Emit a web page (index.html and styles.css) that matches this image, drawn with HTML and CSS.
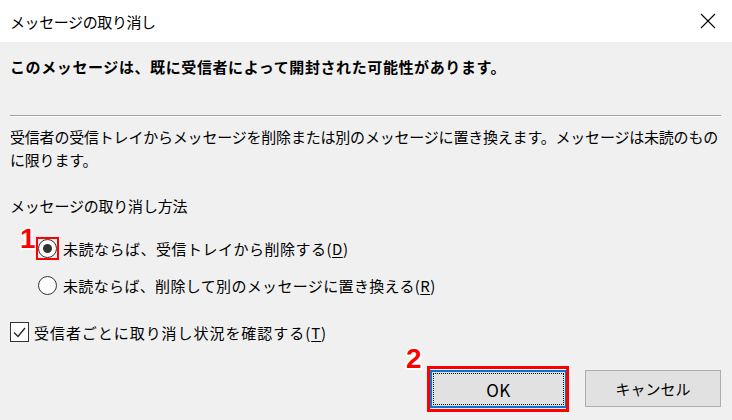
FILE: index.html
```html
<!DOCTYPE html>
<html lang="ja">
<head>
<meta charset="utf-8">
<title>メッセージの取り消し</title>
<link rel="stylesheet" href="styles.css">
</head>
<body>
<div class="dialog">
  <div class="titlebar">
    <span class="title">メッセージの取り消し</span>
    <svg class="close" width="16" height="16" viewBox="0 0 16 16"><path d="M1 1 L15 15 M15 1 L1 15" stroke="#000" stroke-width="1.1" fill="none"/></svg>
  </div>
  <div class="content">
    <p class="heading">このメッセージは、既に受信者によって開封された可能性があります。</p>
    <div class="sep"></div>
    <p class="desc">受信者の受信トレイからメッセージを削除または別のメッセージに置き換えます。メッセージは未読のものに限ります。</p>
    <p class="label">メッセージの取り消し方法</p>
    <div class="option first">
      <span class="radio checked"><span class="mark mark1">1</span><span class="hl hl1"></span></span>
      <span class="text">未読ならば、受信トレイから削除する(<u>D</u>)</span>
    </div>
    <div class="option second">
      <span class="radio"></span>
      <span class="text">未読ならば、削除して別のメッセージに置き換える(<u>R</u>)</span>
    </div>
    <div class="check-row">
      <span class="checkbox"><svg width="17" height="17" viewBox="0 0 17 17"><path d="M3 8.5 L7 12.5 L14 4" stroke="#222" stroke-width="1.3" fill="none"/></svg></span>
      <span class="text">受信者ごとに取り消し状況を確認する(<u>T</u>)</span>
    </div>
    <div class="buttons">
      <button class="btn ok">OK<span class="mark mark2">2</span><span class="hl hl2"></span></button>
      <button class="btn cancel">キャンセル</button>
    </div>
  </div>
</div>
</body>
</html>
```

FILE: styles.css
```css
html, body {
  margin: 0;
  padding: 0;
}
body {
  width: 732px;
  height: 420px;
  background: #f0f0f0;
  font-family: "Noto Sans CJK JP", "Noto Sans", sans-serif;
  color: #000;
  overflow: hidden;
}
.dialog {
  width: 732px;
  height: 420px;
}
.titlebar {
  height: 42px;
  background: #fff;
  display: flex;
  align-items: center;
  justify-content: space-between;
  padding: 0 16px 0 10px;
  box-sizing: border-box;
}
.title {
  font-size: 15px;
  letter-spacing: -0.4px;
  line-height: 20px;
  margin-top: 2px;
}
.close {
  display: block;
}
.content {
  padding: 0 10px;
}
p {
  margin: 0;
}
.heading {
  margin-top: 14px;
  font-size: 15px;
  font-weight: bold;
  line-height: 22px;
  letter-spacing: 0.6px;
}
.sep {
  margin-top: 37px;
  width: 711px;
  height: 1px;
  background: #a0a0a0;
  border-bottom: 1px solid #fff;
}
.desc {
  margin-top: 8px;
  width: 712px;
  font-size: 15px;
  line-height: 23px;
  letter-spacing: -0.2px;
}
.label {
  margin-top: 24px;
  font-size: 15px;
  line-height: 22px;
  letter-spacing: -0.2px;
}
.option, .check-row {
  display: flex;
  align-items: center;
  height: 22px;
  font-size: 15px;
}
.option {
  padding-left: 28px;
}
.option.first {
  margin-top: 20px;
  letter-spacing: 0.5px;
}
.option.second {
  margin-top: 15px;
  letter-spacing: 0.35px;
}
.check-row {
  margin-top: 25px;
  letter-spacing: 0.95px;
}
.text u {
  text-decoration-thickness: 1px;
  text-underline-offset: 2px;
}
.radio {
  position: relative;
  width: 19px;
  height: 19px;
  box-sizing: border-box;
  border: 1px solid #333;
  border-radius: 50%;
  background: #fff;
  margin-right: 6px;
  flex: none;
}
.radio.checked::after {
  content: "";
  position: absolute;
  left: 4px;
  top: 4px;
  width: 9px;
  height: 9px;
  border-radius: 50%;
  background: #333;
}
.checkbox {
  width: 19px;
  height: 20px;
  box-sizing: border-box;
  border: 1px solid #333;
  background: #fff;
  margin-right: 5px;
  display: flex;
  align-items: center;
  justify-content: center;
  flex: none;
}
.checkbox svg {
  display: block;
}
.buttons {
  display: flex;
  justify-content: flex-end;
  align-items: flex-start;
  gap: 18px;
  margin-top: 27px;
  padding-right: 1px;
}
.btn {
  position: relative;
  font-family: "Noto Sans CJK JP", "Noto Sans", sans-serif;
  color: #000;
  background: #e1e1e1;
  box-sizing: border-box;
  padding: 0;
  margin: 0;
}
.ok {
  width: 137px;
  height: 38px;
  font-size: 17px;
  letter-spacing: 0.5px;
  border: 2px solid #0078d7;
  outline: 1px dotted #000;
  outline-offset: -4px;
}
.cancel {
  width: 136px;
  height: 37px;
  font-size: 15px;
  border: 1px solid #adadad;
}
.mark {
  position: absolute;
  font-family: "Liberation Sans", Arial, sans-serif;
  font-weight: bold;
  font-size: 28px;
  line-height: 28px;
  color: #ff0000;
  text-shadow: -2px 0 #fff, 2px 0 #fff, 0 -2px #fff, 0 2px #fff, -1.5px -1.5px #fff, 1.5px 1.5px #fff, -1.5px 1.5px #fff, 1.5px -1.5px #fff;
  letter-spacing: 0;
}
.mark1 {
  left: -19px;
  top: -15px;
}
.mark2 {
  left: -26px;
  top: -27px;
}
.hl {
  position: absolute;
  box-sizing: border-box;
  border: solid #ff0000;
  pointer-events: none;
}
.hl1 {
  left: -3px;
  top: -3px;
  width: 23px;
  height: 23px;
  border-width: 2px;
}
.hl2 {
  left: -5px;
  top: -6px;
  width: 142px;
  height: 46px;
  border-width: 3px;
}
```
